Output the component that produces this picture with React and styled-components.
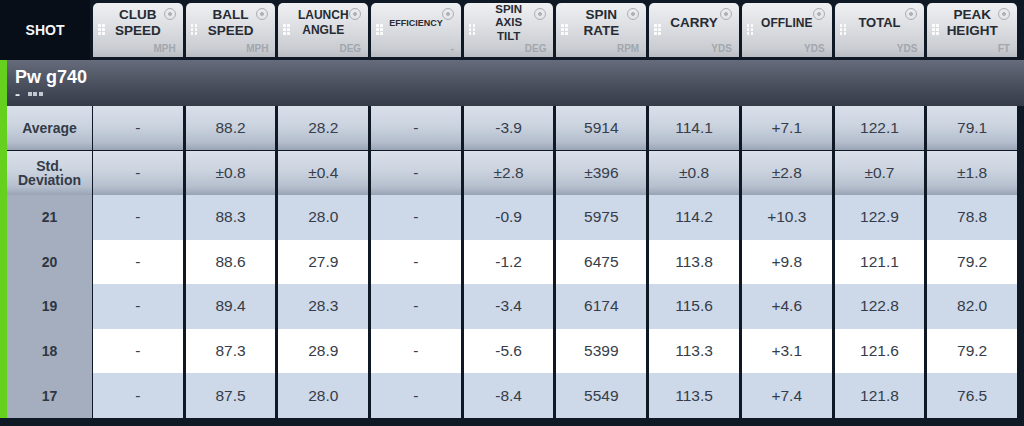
import React from 'react'
import styled, { createGlobalStyle } from 'styled-components'

// Shot table data
const Columns = [
    { id: 'club', lines: ['CLUB', 'SPEED'], unit: 'MPH', size: 13.5, lh: 16 },
    { id: 'ball', lines: ['BALL', 'SPEED'], unit: 'MPH', size: 13.5, lh: 16 },
    { id: 'launch', lines: ['LAUNCH', 'ANGLE'], unit: 'DEG', size: 12, lh: 15 },
    { id: 'eff', lines: ['EFFICIENCY'], unit: '-', size: 9, lh: 12 },
    { id: 'axis', lines: ['SPIN', 'AXIS', 'TILT'], unit: 'DEG', size: 11.5, lh: 13.5 },
    { id: 'spin', lines: ['SPIN', 'RATE'], unit: 'RPM', size: 13.5, lh: 16 },
    { id: 'carry', lines: ['CARRY'], unit: 'YDS', size: 13.5, lh: 16 },
    { id: 'offline', lines: ['OFFLINE'], unit: 'YDS', size: 12, lh: 15 },
    { id: 'total', lines: ['TOTAL'], unit: 'YDS', size: 13, lh: 16 },
    { id: 'peak', lines: ['PEAK', 'HEIGHT'], unit: 'FT', size: 13.5, lh: 16 },
]

const Stats = [
    { label: ['Average'], values: ['-', '88.2', '28.2', '-', '-3.9', '5914', '114.1', '+7.1', '122.1', '79.1'] },
    { label: ['Std.', 'Deviation'], values: ['-', '±0.8', '±0.4', '-', '±2.8', '±396', '±0.8', '±2.8', '±0.7', '±1.8'] },
]

const Shots = [
    { no: 21, values: ['-', '88.3', '28.0', '-', '-0.9', '5975', '114.2', '+10.3', '122.9', '78.8'] },
    { no: 20, values: ['-', '88.6', '27.9', '-', '-1.2', '6475', '113.8', '+9.8', '121.1', '79.2'] },
    { no: 19, values: ['-', '89.4', '28.3', '-', '-3.4', '6174', '115.6', '+4.6', '122.8', '82.0'] },
    { no: 18, values: ['-', '87.3', '28.9', '-', '-5.6', '5399', '113.3', '+3.1', '121.6', '79.2'] },
    { no: 17, values: ['-', '87.5', '28.0', '-', '-8.4', '5549', '113.5', '+7.4', '121.8', '76.5'] },
]

const GlobalStyle = createGlobalStyle`
html, body {
    margin: 0;
    padding: 0;
    background: #0e1925;
}
body {
    font-family: "Liberation Sans", Arial, sans-serif;
}
`

const Screen = styled.div`
width: 1024px;
height: 426px;
overflow: hidden;
background: #0e1925;
display: flex;
flex-direction: column;
`

// Header
const HeaderRow = styled.div`
display: grid;
grid-template-columns: 90px repeat(10, 1fr);
column-gap: 3px;
height: 54px;
padding: 3px 7px 0 0;
margin-bottom: 3px;
`

const ShotCell = styled.div`
margin-top: -3px;
margin-bottom: -3px;
background: #070e18;
display: flex;
align-items: center;
justify-content: center;
color: #f4f6f8;
font-weight: bold;
font-size: 14px;
`

const HeaderCell = styled.div`
position: relative;
display: flex;
flex-direction: column;
border-radius: 5px 5px 0 0;
background: linear-gradient(180deg, #eef0f2 0%, #dcdee2 45%, #c9ccd1 85%, #b9bcc2 100%);
`

const Title = styled.div`
height: 40px;
display: flex;
flex-direction: column;
align-items: center;
justify-content: center;
color: #272b33;
font-weight: bold;
font-size: ${p => p.$size}px;
line-height: ${p => p.$lh}px;
`

const Unit = styled.div`
text-align: right;
padding-right: 7px;
font-size: 10px;
font-weight: bold;
line-height: 12px;
color: #a2a6ad;
`

const Grip = styled.div`
position: absolute;
left: 5px;
top: 21px;
display: grid;
grid-template-columns: repeat(2, 2.5px);
grid-auto-rows: 2.5px;
gap: 1.5px;

span {
    background: rgba(255, 255, 255, 0.9);
    border-radius: 0.5px;
}
`

const Close = styled.div`
position: absolute;
right: 7px;
top: 5px;
width: 10px;
height: 10px;
border: 1px solid #abafb5;
border-radius: 50%;
background: radial-gradient(circle, #b0b4ba 0 1.6px, transparent 2.2px);
`

// Group + rows
const Group = styled.div`
border-left: 7px solid #66d01f;
display: flex;
flex-direction: column;
`

const GroupHeader = styled.div`
height: 46px;
box-sizing: border-box;
padding: 7px 0 0 8px;
background: linear-gradient(180deg, #666c7b 0%, #4e5462 45%, #363b48 100%);
color: #ffffff;
`

const ClubName = styled.div`
font-size: 18px;
font-weight: bold;
line-height: 20px;
`

const ClubSub = styled.div`
display: flex;
align-items: center;
gap: 1.5px;
margin-top: 2px;
font-size: 15px;
font-weight: bold;
line-height: 10px;
color: #e8ebf0;

b {
    width: 11px;
}

i {
    display: inline-block;
    width: 4px;
    height: 4px;
    background: #c4c8d0;
}
`

const Row = styled.div`
display: grid;
grid-template-columns: 83px repeat(10, 1fr);
column-gap: 3px;
padding-right: 7px;
height: ${p => p.$h}px;
margin-bottom: ${p => p.$gap || 0}px;
`

const StatCell = styled.div`
display: flex;
align-items: center;
justify-content: center;
background: linear-gradient(180deg, #d9e0ea 0%, #cbd3df 45%, #b4becd 82%, #98a3b4 100%);
color: #363d4b;
font-size: 15.5px;
`

const StatLabel = styled(StatCell)`
flex-direction: column;
margin-right: -2px;
font-size: 14px;
font-weight: bold;
line-height: 14px;
color: #343b48;
text-align: center;
`

const ShotCellValue = styled.div`
display: flex;
align-items: center;
justify-content: center;
background: ${p => (p.$light ? '#ffffff' : '#cdd8e8')};
color: #353c4a;
font-size: 15.5px;
`

const ShotLabel = styled.div`
display: flex;
align-items: center;
justify-content: center;
margin-right: -2px;
background: #a4aebe;
color: #2f3643;
font-size: 14px;
font-weight: bold;
`

const App = () => {
    return (
        <Screen>
            <GlobalStyle />
            <HeaderRow>
                <ShotCell>SHOT</ShotCell>
                {Columns.map((col) => (
                    <HeaderCell key={col.id}>
                        <Grip>{[0, 1, 2, 3, 4, 5].map((d) => <span key={d} />)}</Grip>
                        <Close />
                        <Title $size={col.size} $lh={col.lh}>
                            {col.lines.map((line) => <span key={line}>{line}</span>)}
                        </Title>
                        <Unit>{col.unit}</Unit>
                    </HeaderCell>
                ))}
            </HeaderRow>

            <Group>
                <GroupHeader>
                    <ClubName>Pw g740</ClubName>
                    <ClubSub><b>-</b><i /><i /><i /></ClubSub>
                </GroupHeader>

                {Stats.map((stat, idx) => (
                    <Row key={stat.label[0]} $h={44} $gap={idx === 0 ? 1 : 0}>
                        <StatLabel>
                            {stat.label.map((l) => <span key={l}>{l}</span>)}
                        </StatLabel>
                        {stat.values.map((v, i) => <StatCell key={i}>{v}</StatCell>)}
                    </Row>
                ))}

                {Shots.map((shot, idx) => (
                    <Row key={shot.no} $h={44.6}>
                        <ShotLabel>{shot.no}</ShotLabel>
                        {shot.values.map((v, i) => (
                            <ShotCellValue key={i} $light={idx % 2 === 1}>{v}</ShotCellValue>
                        ))}
                    </Row>
                ))}
            </Group>
        </Screen>
    )
}

export default App
